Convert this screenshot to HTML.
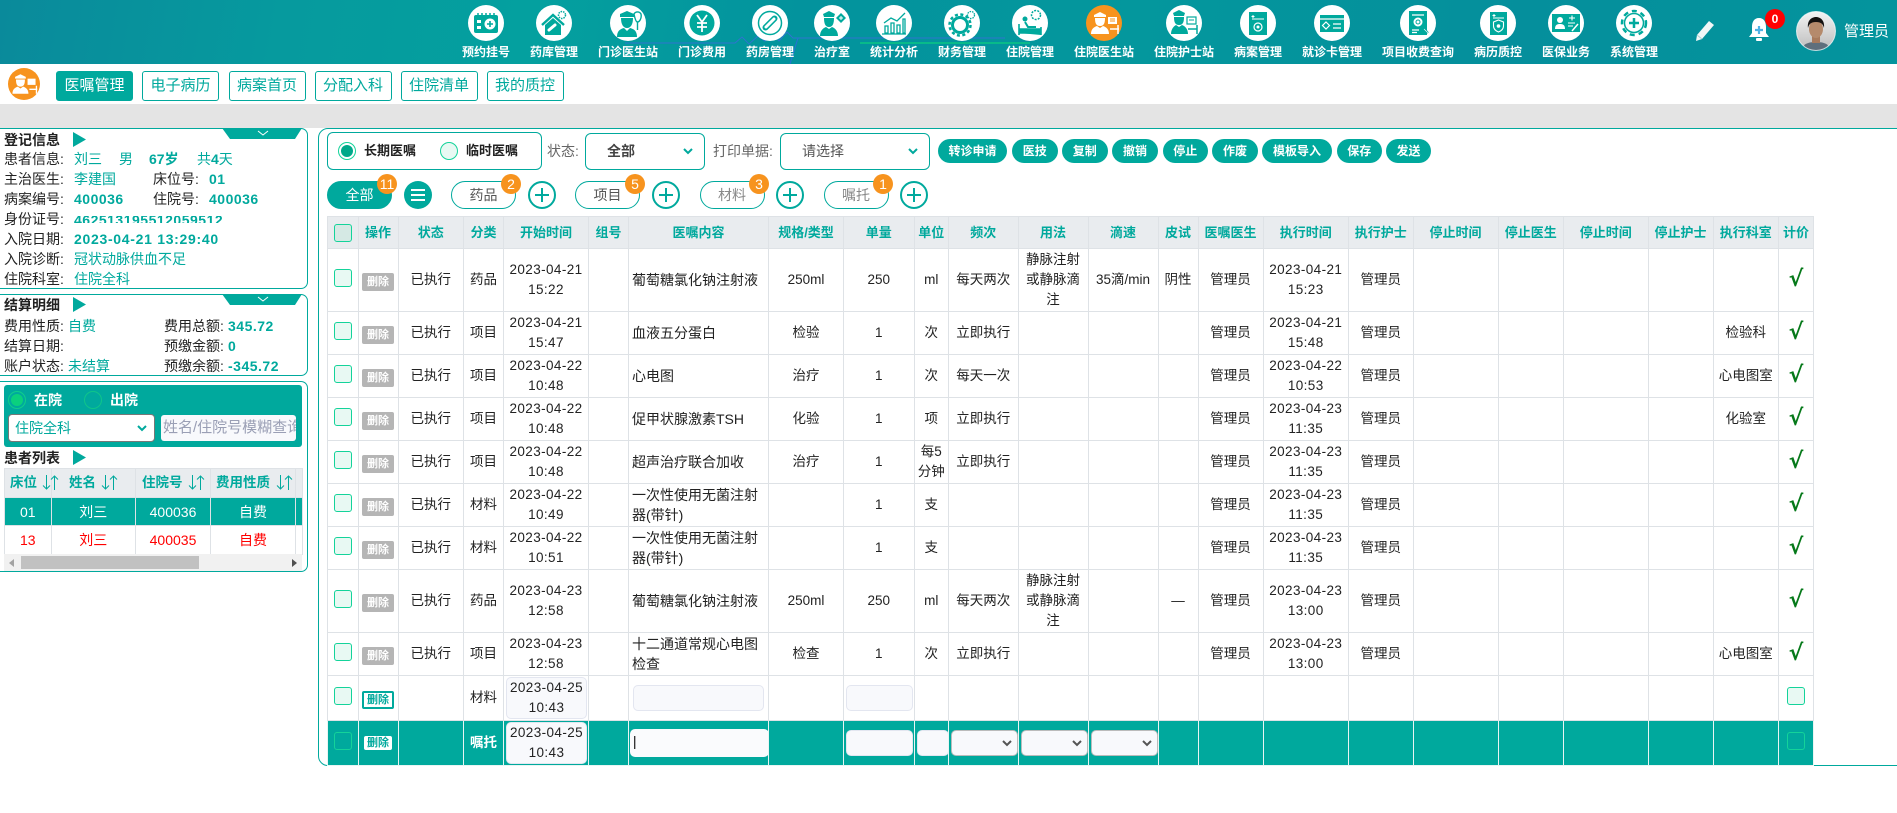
<!DOCTYPE html>
<html lang="zh"><head><meta charset="utf-8"><title>医嘱管理</title>
<style>
*{box-sizing:border-box}
html,body{margin:0;padding:0;width:1897px;height:813px;overflow:hidden;background:#fff}
body{position:relative;font:14px/20px "Liberation Sans","Noto Sans CJK SC",sans-serif;color:#222}
.a{position:absolute}
#hd{left:0;top:0;width:1897px;height:64px;overflow:hidden;background:linear-gradient(100deg,#0a8a9b 0,#069a9e 15%,#04a09f 28%,#03939d 42%,#04979d 60%,#058f9c 80%,#04949d 100%)}
.n{position:absolute;top:5px;width:110px;margin-left:-55px;text-align:center;color:#fff;font-weight:700;font-size:12px;line-height:16px}
.n svg{display:block;margin:0 auto 3px;width:36px;height:36px}
.tab{position:absolute;top:71px;height:30px;width:77px;border:1px solid #00a99d;border-radius:3px;color:#00a99d;font-size:15px;line-height:28px;text-align:center}
.tab.on{background:#00a99d;color:#fff}
.pn{position:absolute;left:0;width:308px;border:1px solid #00a99d;border-left:0;border-radius:0 7px 7px 0;background:#fff}
.row{position:absolute;white-space:nowrap;line-height:20px}
.v{color:#00a99d}.b{font-weight:700;letter-spacing:.5px}
.tt{font-weight:700;color:#222}
.sq{position:absolute;width:18px;height:18px;background:#e8f9f3;border:1px solid #14d39a;border-radius:3px}
.bx{position:absolute;border:1px solid #00a99d;border-radius:6px;background:#fff}
.bt{position:absolute;top:139px;height:24px;background:#00a99d;color:#fff;border-radius:12px;font-size:12px;font-weight:700;line-height:24px;text-align:center}
.pl{position:absolute;top:181px;width:65px;height:28px;border:1px solid #00a99d;border-radius:14px;background:#fff;color:#555;text-align:center;line-height:27px;font-size:14px}
.bd{position:absolute;top:174px;width:20px;height:20px;border-radius:50%;background:#f7931e;color:#fff;text-align:center;line-height:20px;font-size:14px}
.pc{position:absolute;top:181px;width:28px;height:28px;border:2px solid #00a99d;border-radius:50%;background:#fff}
.pc:before{content:"";position:absolute;left:5px;top:11px;width:14px;height:2px;background:#00a99d}
.pc:after{content:"";position:absolute;left:11px;top:5px;width:2px;height:14px;background:#00a99d}
table{border-collapse:collapse;table-layout:fixed}
#tb{position:absolute;left:326.5px;top:216px;width:1486.5px}
#tb td,#tb th{border:1px solid #dee2e6;padding:0 2px;text-align:center;vertical-align:middle;font-size:13.5px;line-height:20px;font-weight:400;color:#222;overflow:hidden}
#tb th{background:#e9ecef;color:#00a99d;font-weight:700;font-size:13px;white-space:nowrap;padding:0}
#tb td.l{text-align:left;padding-left:3px;font-size:14px}
.d{letter-spacing:.4px;font-size:14px}
.ck{display:block;width:18px;height:18px;margin:-5px auto 0;background:#e8f9f3;border:1px solid #14d39a;border-radius:3px}
.dl{display:block;width:32px;height:18px;margin:3px auto 0;background:#b5b5b5;color:#fff;font-size:11px;font-weight:700;line-height:18px;border-radius:2px}
.y{color:#06791a;font-size:22px;font-weight:700;position:relative;top:1px;font-family:"DejaVu Sans",sans-serif}
#tb tr.g td{background:#00a99d;color:#fff;border-color:#e8f5f3;overflow:visible}
.ip{display:block;background:#f8f9fc;border:1px solid #e3e6f0;border-radius:5px;margin:auto}
#lt{position:absolute;left:4px;top:468px;width:298px}
#lt td,#lt th{border:1px solid #dee2e6;text-align:center;padding:0;line-height:20px;font-size:14px;overflow:hidden;white-space:nowrap}
#lt th{background:#e9ecef}
#lt .s td{background:#00a99d;color:#fff}
#lt .r td{color:#f00}
.lh{position:absolute;top:473px;color:#00a99d;font-weight:700;font-size:13.5px;line-height:20px;white-space:nowrap}
.ar{position:absolute;top:475px}
</style></head><body>
<div id="hd" class="a">
<svg class="a" style="left:0;top:0" width="1897" height="64"><path d="M625 43h110l7-6 7 7 9-8 7 5 8-8 6 8 8-9 6 6h212" fill="none" stroke="#2f74d0" stroke-width="1"/><path d="M790 64l8-26" stroke="#2a6fd8" fill="none"/><path d="M860 43h170" stroke="#0bd07f" stroke-width="1.2" fill="none"/></svg>
<div class="n" style="left:486px"><svg viewBox="0 0 36 36"><circle cx="18" cy="18" r="18" fill="#fff"/><rect x="6" y="10" width="24" height="18" rx="2" fill="#00a99d"/><path d="M10 8v4M14 8v4M18 8v4M22 8v4M26 8v4" stroke="#00a99d" stroke-width="1.5"/><rect x="9" y="15" width="4" height="3" fill="#fff"/><rect x="9" y="21" width="4" height="3" fill="#fff"/><circle cx="22" cy="19" r="5.5" fill="#fff"/><path d="M22 16v6M19 19h6" stroke="#00a99d" stroke-width="1.6"/></svg>预约挂号</div>
<div class="n" style="left:554px"><svg viewBox="0 0 36 36"><circle cx="18" cy="18" r="18" fill="#fff"/><path d="M6 20L17 10l11 10" fill="none" stroke="#00a99d" stroke-width="2.4"/><path d="M9 20L17 13l8 7v10H9z" fill="#00a99d"/><path d="M13 25l6-5" stroke="#fff" stroke-width="3" stroke-linecap="round"/><circle cx="26" cy="10" r="3.5" fill="none" stroke="#00a99d" stroke-width="1.5" stroke-dasharray="1.5 1"/></svg>药库管理</div>
<div class="n" style="left:628px"><svg viewBox="0 0 36 36"><circle cx="18" cy="18" r="18" fill="#fff"/><path d="M10 9l7-3 7 3v3H10z" fill="#00a99d"/><path d="M11 13h12c0 6-2 10-6 10s-6-4-6-10z" fill="#00a99d"/><path d="M7 32c0-6 3-8 7-9l3 3 3-3c4 1 7 3 7 9z" fill="#00a99d"/><path d="M24 9a4 4 0 0 1 7 0c1 5-2 8-3.500 8S25 14 24 9zM27.500 17v8" fill="none" stroke="#00a99d" stroke-width="1.4"/></svg>门诊医生站</div>
<div class="n" style="left:702px"><svg viewBox="0 0 36 36"><circle cx="18" cy="18" r="18" fill="#fff"/><circle cx="18" cy="18" r="12.500" fill="#00a99d"/><path d="M13 10l5 7 5-7M18 17v10M13 18h10M13 22h10" fill="none" stroke="#fff" stroke-width="1.8"/></svg>门诊费用</div>
<div class="n" style="left:770px"><svg viewBox="0 0 36 36"><circle cx="18" cy="18" r="18" fill="#fff"/><circle cx="18" cy="18" r="11.500" fill="none" stroke="#00a99d" stroke-width="1.500"/><path d="M13.500 22.500l9-9" stroke="#00a99d" stroke-width="6" stroke-linecap="round"/><path d="M14 22l8-8" stroke="#fff" stroke-width="3" stroke-linecap="round"/></svg>药房管理</div>
<div class="n" style="left:832px"><svg viewBox="0 0 36 36"><circle cx="18" cy="18" r="18" fill="#fff"/><path d="M9 9l6-3 6 3-1 3H10z" fill="#00a99d"/><path d="M10 13h10c0 5-1 9-5 9s-5-4-5-9z" fill="#00a99d"/><path d="M6 31c0-5 3-8 6-9l3 2 3-2c3 1 6 4 6 9z" fill="#00a99d"/><path d="M27 8l5 5-5 5-5-5z" fill="#00a99d"/><path d="M27 11v4M25 13h4" stroke="#fff" stroke-width="1"/></svg>治疗室</div>
<div class="n" style="left:894px"><svg viewBox="0 0 36 36"><circle cx="18" cy="18" r="18" fill="#fff"/><path d="M6 29h24M8 18l7-5 6 3 8-8" fill="none" stroke="#00a99d" stroke-width="1.300"/><path d="M9 21h3v7H9zM15 18h3v10h-3zM21 20h3v8h-3zM27 14h2v14h-2z" fill="none" stroke="#00a99d" stroke-width="1.300"/></svg>统计分析</div>
<div class="n" style="left:962px"><svg viewBox="0 0 36 36"><circle cx="18" cy="18" r="18" fill="#fff"/><circle cx="16" cy="20" r="7.500" fill="none" stroke="#00a99d" stroke-width="3"/><circle cx="16" cy="20" r="10.500" fill="none" stroke="#00a99d" stroke-width="2.500" stroke-dasharray="3 2.500"/><circle cx="27" cy="10" r="3.500" fill="none" stroke="#00a99d" stroke-width="1.300" stroke-dasharray="1.500 1"/></svg>财务管理</div>
<div class="n" style="left:1030px"><svg viewBox="0 0 36 36"><circle cx="18" cy="18" r="18" fill="#fff"/><path d="M7 19v11M7 28h22v2M29 22v8M7 24h22v4H7z" fill="#00a99d" stroke="#00a99d" stroke-width="1.600"/><circle cx="13" cy="14" r="2.500" fill="#00a99d"/><path d="M13 17l3 5h8" fill="none" stroke="#00a99d" stroke-width="2"/><circle cx="24" cy="10" r="4.500" fill="none" stroke="#00a99d" stroke-width="1.500" stroke-dasharray="2 1.200"/></svg>住院管理</div>
<div class="n" style="left:1104px"><svg viewBox="0 0 36 36"><circle cx="18" cy="18" r="18" fill="#f7931e"/><path d="M8 10l6-3 6 3v2H8z" fill="#fff"/><path d="M9 13h10c0 5-1 8-5 8s-5-3-5-8z" fill="#fff"/><path d="M5 29c0-5 3-7 6-8l3 2 3-2c3 1 6 3 6 8z" fill="#fff"/><rect x="22" y="12" width="9" height="7" fill="#fff"/><path d="M24 14h5M24 16h5" stroke="#f7931e"/><path d="M24 24h9M32 20v9" stroke="#fff" stroke-width="1.500"/></svg>住院医生站</div>
<div class="n" style="left:1184px"><svg viewBox="0 0 36 36"><circle cx="18" cy="18" r="18" fill="#fff"/><path d="M7 8l6-3 6 3-1 3H8z" fill="#00a99d"/><path d="M8 12h10c0 5-1 8-5 8s-5-3-5-8z" fill="#00a99d"/><path d="M5 29c0-5 3-8 5-9l3 2 3-2c3 1 6 4 6 9z" fill="#00a99d"/><rect x="21" y="12" width="9" height="7" fill="none" stroke="#00a99d" stroke-width="1.200"/><path d="M23 15h5" stroke="#00a99d"/><path d="M22 24h9M31 20v9" stroke="#00a99d" stroke-width="1.500"/></svg>住院护士站</div>
<div class="n" style="left:1258px"><svg viewBox="0 0 36 36"><circle cx="18" cy="18" r="18" fill="#fff"/><rect x="9" y="7" width="18" height="23" fill="#00a99d"/><path d="M12 14h12M13 10v3M11.500 11.500h3" stroke="#fff"/><circle cx="18" cy="22" r="4" fill="none" stroke="#fff" stroke-width="1.200"/><circle cx="18" cy="22" r="1.500" fill="#fff"/></svg>病案管理</div>
<div class="n" style="left:1332px"><svg viewBox="0 0 36 36"><circle cx="18" cy="18" r="18" fill="#fff"/><rect x="6" y="10" width="24" height="17" fill="#00a99d"/><path d="M6 14h24M19 19h8M19 23h8" stroke="#fff" stroke-width="1.300"/><path d="M12 17l3.500 3.500L12 24l-3.500-3.500z" fill="none" stroke="#fff" stroke-width="1.200"/></svg>就诊卡管理</div>
<div class="n" style="left:1418px"><svg viewBox="0 0 36 36"><circle cx="18" cy="18" r="18" fill="#fff"/><rect x="9" y="6" width="18" height="24" fill="#00a99d"/><path d="M12 10h12M12 25h7M12 27.500h5" stroke="#fff" stroke-width="1.200"/><circle cx="18" cy="17" r="5" fill="#fff" stroke="#00a99d"/><circle cx="18" cy="17" r="2" fill="none" stroke="#00a99d"/><path d="M22 21l6 7" stroke="#00a99d" stroke-width="2"/><path d="M24 24l4 4" stroke="#fff" stroke-width=".6"/></svg>项目收费查询</div>
<div class="n" style="left:1498px"><svg viewBox="0 0 36 36"><circle cx="18" cy="18" r="18" fill="#fff"/><rect x="10" y="7" width="17" height="23" fill="#00a99d"/><path d="M13 13h11M14 9v3M12.500 10.500h3" stroke="#fff"/><path d="M18.500 15l5 2v4c0 3-2.500 5-5 6-2.500-1-5-3-5-6v-4z" fill="none" stroke="#fff" stroke-width="1.100"/><circle cx="18.500" cy="21" r="1.800" fill="#fff"/></svg>病历质控</div>
<div class="n" style="left:1566px"><svg viewBox="0 0 36 36"><circle cx="18" cy="18" r="18" fill="#fff"/><rect x="4" y="9" width="28" height="18" fill="#00a99d"/><circle cx="12" cy="15" r="3" fill="#fff"/><path d="M7 24c0-4 2-5 5-5s5 1 5 5z" fill="#fff"/><path d="M21 13h6M24 10.500v5M20 18h7M20 21h5" stroke="#fff" stroke-width="1.100"/><path d="M24 26l6-7" stroke="#fff" stroke-width="1.500"/></svg>医保业务</div>
<div class="n" style="left:1634px"><svg viewBox="0 0 36 36"><circle cx="18" cy="18" r="18" fill="#fff"/><circle cx="18" cy="18" r="9.500" fill="none" stroke="#00a99d" stroke-width="1.500"/><circle cx="18" cy="18" r="12" fill="none" stroke="#00a99d" stroke-width="2.500" stroke-dasharray="5 4"/><path d="M18 13v10M13 18h10" stroke="#00a99d" stroke-width="2.500"/></svg>系统管理</div>
<svg class="a" style="left:1694px;top:19px" width="24" height="24" viewBox="0 0 24 24"><path d="M15 2l5 4L8 20l-6 2 1-6z" fill="#f2f7f7"/><path d="M3 16l5 4" stroke="#aacfd0"/></svg>
<svg class="a" style="left:1747px;top:17px" width="24" height="28" viewBox="0 0 24 28"><path d="M12 1c5 0 7 4 7 9v6l3 4H2l3-4v-6c0-5 2-9 7-9z" fill="#fff"/><rect x="9" y="21" width="6" height="3" rx="1" fill="#fff"/><path d="M12 9v8M8 13h8" stroke="#4fb2e6" stroke-width="2.200"/></svg>
<div class="a" style="left:1765px;top:9px;width:20px;height:20px;border-radius:50%;background:#f00;color:#fff;font-size:12px;font-weight:700;text-align:center;line-height:20px">0</div>
<svg class="a" style="left:1796px;top:11px" width="40" height="40" viewBox="0 0 40 40"><defs><clipPath id="cp"><circle cx="20" cy="20" r="19.500"/></clipPath><linearGradient id="ag" x1="0" y1="0" x2="0" y2="1"><stop offset="0" stop-color="#f4f4f4"/><stop offset="1" stop-color="#bbb"/></linearGradient></defs><g clip-path="url(#cp)"><rect width="40" height="40" fill="url(#ag)"/><path d="M6 40c0-7 6-9 14-9s14 2 14 9z" fill="#5f6f7c"/><rect x="16" y="24" width="8" height="8" fill="#a87a5c"/><ellipse cx="20" cy="18" rx="7" ry="9" fill="#b58a6c"/><path d="M12 17c-1-8 4-11 8-11s9 3 8 11c-1-4-3-6-8-6s-7 2-8 6z" fill="#141110"/></g><circle cx="20" cy="20" r="19.500" fill="none" stroke="#fff" stroke-opacity=".7"/></svg>
<div class="a" style="left:1844px;top:22px;color:#fff;font-size:15px;white-space:nowrap">管理员</div>
</div>

<svg class="a" style="left:8px;top:68px" width="32" height="32" viewBox="0 0 36 36"><circle cx="18" cy="18" r="18" fill="#f7931e"/><path d="M8 10l6-3 6 3v2H8z" fill="#fff"/><path d="M9 13h10c0 5-1 8-5 8s-5-3-5-8z" fill="#fff"/><path d="M5 29c0-5 3-7 6-8l3 2 3-2c3 1 6 3 6 8z" fill="#fff"/><rect x="22" y="12" width="9" height="7" fill="#fff"/><path d="M24 24h9M32 20v9" stroke="#fff" stroke-width="1.500"/></svg>
<div class="tab on" style="left:56px">医嘱管理</div>
<div class="tab" style="left:142px">电子病历</div>
<div class="tab" style="left:228.500px">病案首页</div>
<div class="tab" style="left:314.500px">分配入科</div>
<div class="tab" style="left:400.500px">住院清单</div>
<div class="tab" style="left:486.500px">我的质控</div>
<div class="a" style="left:0;top:104px;width:1897px;height:24px;background:#e4e4e4"></div>

<!-- panel 1 -->
<div class="pn" style="top:128px;height:161px"></div>
<svg class="a" style="left:222px;top:128px" width="83" height="12"><path d="M0 0h80l-7 11H8z" fill="#00a99d"/><path d="M36 3l5 4 5-4" fill="none" stroke="#fff"/></svg>
<div class="row tt" style="left:4px;top:130px">登记信息</div>
<svg class="a" style="left:73px;top:132px" width="14" height="15"><path d="M0 0l13 7.500L0 15z" fill="#00a99d"/></svg>
<div class="row" style="left:4px;top:149px">患者信息:</div><div class="row v" style="left:74px;top:149px">刘三</div><div class="row v" style="left:119px;top:149px">男</div><div class="row v b" style="left:149px;top:149px;letter-spacing:0">67岁</div><div class="row v" style="left:197px;top:149px">共<b>4</b>天</div>
<div class="row" style="left:4px;top:169px">主治医生:</div><div class="row v" style="left:74px;top:169px">李建国</div><div class="row" style="left:153px;top:169px">床位号:</div><div class="row v b" style="left:209px;top:169px">01</div>
<div class="row" style="left:4px;top:189px">病案编号:</div><div class="row v b" style="left:74px;top:189px">400036</div><div class="row" style="left:153px;top:189px">住院号:</div><div class="row v b" style="left:209px;top:189px">400036</div>
<div class="row" style="left:4px;top:209px">身份证号:</div><div class="a" style="left:74px;top:216px;height:7px;overflow:hidden;width:160px"><div class="v b" style="margin-top:-6px;white-space:nowrap;line-height:20px">462513195512059512</div></div>
<div class="row" style="left:4px;top:229px">入院日期:</div><div class="row v b" style="left:74px;top:229px;letter-spacing:.7px">2023-04-21 13:29:40</div>
<div class="row" style="left:4px;top:249px">入院诊断:</div><div class="row v" style="left:74px;top:249px">冠状动脉供血不足</div>
<div class="row" style="left:4px;top:269px">住院科室:</div><div class="row v" style="left:74px;top:269px">住院全科</div>

<!-- panel 2 -->
<div class="pn" style="top:294px;height:82px"></div>
<svg class="a" style="left:222px;top:294px" width="83" height="12"><path d="M0 0h80l-7 11H8z" fill="#00a99d"/><path d="M36 3l5 4 5-4" fill="none" stroke="#fff"/></svg>
<div class="row tt" style="left:4px;top:295px">结算明细</div>
<svg class="a" style="left:73px;top:297px" width="14" height="15"><path d="M0 0l13 7.500L0 15z" fill="#00a99d"/></svg>
<div class="row" style="left:4px;top:316px">费用性质:</div><div class="row v" style="left:68px;top:316px">自费</div><div class="row" style="left:164px;top:316px">费用总额:</div><div class="row v b" style="left:228px;top:316px">345.72</div>
<div class="row" style="left:4px;top:336px">结算日期:</div><div class="row" style="left:164px;top:336px">预缴金额:</div><div class="row v b" style="left:228px;top:336px">0</div>
<div class="row" style="left:4px;top:356px">账户状态:</div><div class="row v" style="left:68px;top:356px">未结算</div><div class="row" style="left:164px;top:356px">预缴余额:</div><div class="row v b" style="left:228px;top:356px">-345.72</div>

<!-- panel 3 -->
<div class="pn" style="top:381px;height:191px"></div>
<div class="a" style="left:4px;top:385px;width:298px;height:62px;background:#00a99d;border-radius:3px"></div>
<div class="a" style="left:8px;top:391px;width:18px;height:18px;border-radius:50%;border:1.500px solid #0fcf8a;background:#fff0"></div>
<div class="a" style="left:11px;top:394px;width:12px;height:12px;border-radius:50%;background:#0ad07e"></div>
<div class="row" style="left:34px;top:390px;color:#fff;font-weight:700">在院</div>
<div class="a" style="left:84px;top:391px;width:18px;height:18px;border-radius:50%;border:1.500px solid #0fc58a"></div>
<div class="row" style="left:110px;top:390px;color:#fff;font-weight:700">出院</div>
<div class="a" style="left:8px;top:414px;width:147px;height:28px;background:#fff;border:1px solid #777;border-radius:4px;color:#00a99d;line-height:26px;padding-left:6px">住院全科<svg class="a" style="right:7px;top:10px" width="10" height="7"><path d="M1 1l4 4 4-4" fill="none" stroke="#00a99d" stroke-width="2"/></svg></div>
<div class="a" style="left:161px;top:415px;width:135px;height:26px;background:#f8f9fc;border-radius:3px;color:#9a9fb5;font-size:15px;line-height:26px;padding-left:2px;overflow:hidden;white-space:nowrap">姓名/住院号模糊查询</div>
<div class="row tt" style="left:4px;top:448px">患者列表</div>
<svg class="a" style="left:73px;top:450px" width="14" height="15"><path d="M0 0l13 7.500L0 15z" fill="#00a99d"/></svg>
<table id="lt"><colgroup><col style="width:46.500px"><col style="width:84.500px"><col style="width:75px"><col style="width:85px"><col style="width:7px"></colgroup>
<tr style="height:29px"><th></th><th></th><th></th><th></th><th></th></tr>
<tr class="s" style="height:28px"><td>01</td><td>刘三</td><td>400036</td><td>自费</td><td></td></tr>
<tr class="r" style="height:29px"><td>13</td><td>刘三</td><td>400035</td><td>自费</td><td></td></tr></table>
<div class="lh" style="left:10px">床位</div>
<svg class="ar" style="left:42px" width="17" height="15"><path d="M4.500 0v14M1 10.500l3.500 3.500L8 10.500M12.500 15V1M9 4.500L12.500 1 16 4.500" fill="none" stroke="#00a99d"/></svg>
<div class="lh" style="left:69px">姓名</div>
<svg class="ar" style="left:101px" width="17" height="15"><path d="M4.500 0v14M1 10.500l3.500 3.500L8 10.500M12.500 15V1M9 4.500L12.500 1 16 4.500" fill="none" stroke="#00a99d"/></svg>
<div class="lh" style="left:142px">住院号</div>
<svg class="ar" style="left:188px" width="17" height="15"><path d="M4.500 0v14M1 10.500l3.500 3.500L8 10.500M12.500 15V1M9 4.500L12.500 1 16 4.500" fill="none" stroke="#00a99d"/></svg>
<div class="lh" style="left:216px">费用性质</div>
<svg class="ar" style="left:276px" width="17" height="15"><path d="M4.500 0v14M1 10.500l3.500 3.500L8 10.500M12.500 15V1M9 4.500L12.500 1 16 4.500" fill="none" stroke="#00a99d"/></svg>
<div class="a" style="left:4px;top:554px;width:298px;height:17px;background:#f1f1f1"></div>
<div class="a" style="left:21px;top:556px;width:178px;height:13px;background:#c1c1c1"></div>
<svg class="a" style="left:9px;top:559px" width="6" height="8"><path d="M5 0v8L0 4z" fill="#a3a3a3"/></svg>
<svg class="a" style="left:292px;top:559px" width="6" height="8"><path d="M0 0v8l5-4z" fill="#505050"/></svg>

<!-- right panel -->
<div class="a" style="left:318px;top:128px;width:1590px;height:638px;border:1px solid #00a99d;border-radius:10px"></div>
<div class="bx" style="left:327px;top:132px;width:215px;height:38px"></div>
<div class="a" style="left:338px;top:142px;width:18px;height:18px;border-radius:50%;border:1.500px solid #14d39a"></div>
<div class="a" style="left:341px;top:145px;width:12px;height:12px;border-radius:50%;background:#00a98a"></div>
<div class="row" style="left:364px;top:141px;font-size:13px;font-weight:700">长期医嘱</div>
<div class="a" style="left:440px;top:142px;width:18px;height:18px;border-radius:50%;border:1.500px solid #14d39a;background:#e8f9f3"></div>
<div class="row" style="left:466px;top:141px;font-size:13px;font-weight:700">临时医嘱</div>
<div class="row" style="left:547px;top:141px;color:#666;font-size:14px">状态:</div>
<div class="bx" style="left:585px;top:133px;width:120px;height:37px;line-height:35px;padding-left:21px;color:#444;font-weight:700">全部<svg class="a" style="right:11px;top:14px" width="10" height="7"><path d="M1 1l4 4 4-4" fill="none" stroke="#00a99d" stroke-width="2"/></svg></div>
<div class="row" style="left:713px;top:141px;color:#666">打印单据:</div>
<div class="bx" style="left:780px;top:133px;width:150px;height:37px;line-height:35px;padding-left:21px;color:#555">请选择<svg class="a" style="right:11px;top:14px" width="10" height="7"><path d="M1 1l4 4 4-4" fill="none" stroke="#00a99d" stroke-width="2"/></svg></div>
<div class="bt" style="left:938px;width:69px">转诊申请</div>
<div class="bt" style="left:1012px;width:45.500px">医技</div>
<div class="bt" style="left:1062px;width:45.500px">复制</div>
<div class="bt" style="left:1112px;width:46px">撤销</div>
<div class="bt" style="left:1162.500px;width:45.500px">停止</div>
<div class="bt" style="left:1212px;width:46px">作废</div>
<div class="bt" style="left:1262px;width:70px">模板导入</div>
<div class="bt" style="left:1336.500px;width:45.500px">保存</div>
<div class="bt" style="left:1386px;width:45px">发送</div>

<div class="pl" style="left:327px;background:#00a99d;color:#fff;border-color:#00a99d">全部</div><div class="bd" style="left:377px">11</div>
<div class="a" style="left:404px;top:181px;width:28px;height:28px;border-radius:50%;background:#00a99d"><div class="a" style="left:7px;top:8px;width:14px;height:2px;background:#fff"></div><div class="a" style="left:7px;top:13px;width:14px;height:2px;background:#fff"></div><div class="a" style="left:7px;top:18px;width:14px;height:2px;background:#fff"></div></div>
<div class="pl" style="left:451px">药品</div><div class="bd" style="left:501px">2</div><div class="pc" style="left:528px"></div>
<div class="pl" style="left:575px">项目</div><div class="bd" style="left:625px">5</div><div class="pc" style="left:652px"></div>
<div class="pl" style="left:699.500px;color:#888">材料</div><div class="bd" style="left:749px">3</div><div class="pc" style="left:776px"></div>
<div class="pl" style="left:823.500px;color:#888">嘱托</div><div class="bd" style="left:873px">1</div><div class="pc" style="left:900px"></div>

<table id="tb"><colgroup><col style="width:31px"><col style="width:40px"><col style="width:65.500px"><col style="width:40px"><col style="width:85px"><col style="width:40px"><col style="width:140px"><col style="width:75px"><col style="width:70.500px"><col style="width:34.500px"><col style="width:69.500px"><col style="width:70px"><col style="width:70px"><col style="width:40px"><col style="width:65px"><col style="width:85.500px"><col style="width:64.500px"><col style="width:85px"><col style="width:65.500px"><col style="width:84.500px"><col style="width:65px"><col style="width:65.500px"><col style="width:35px"></colgroup>
<tr style="height:32px"><th><span class="ck" style="margin-top:0;background:#d5e9e4"></span></th><th>操作</th><th>状态</th><th>分类</th><th>开始时间</th><th>组号</th><th>医嘱内容</th><th>规格/类型</th><th>单量</th><th>单位</th><th>频次</th><th>用法</th><th>滴速</th><th>皮试</th><th>医嘱医生</th><th>执行时间</th><th>执行护士</th><th>停止时间</th><th>停止医生</th><th>停止时间</th><th>停止护士</th><th>执行科室</th><th>计价</th></tr>
<tr style="height:63px"><td><span class="ck"></span></td><td><span class="dl">删除</span></td><td>已执行</td><td>药品</td><td class="d">2023-04-21<br>15:22</td><td></td><td class="l">葡萄糖氯化钠注射液</td><td>250ml</td><td>250</td><td>ml</td><td>每天两次</td><td>静脉注射或静脉滴注</td><td style="white-space:nowrap;padding:0">35滴/min</td><td>阴性</td><td>管理员</td><td class="d">2023-04-21<br>15:23</td><td>管理员</td><td></td><td></td><td></td><td></td><td></td><td><span class="y">√</span></td></tr>
<tr style="height:43px"><td><span class="ck"></span></td><td><span class="dl">删除</span></td><td>已执行</td><td>项目</td><td class="d">2023-04-21<br>15:47</td><td></td><td class="l">血液五分蛋白</td><td>检验</td><td>1</td><td>次</td><td>立即执行</td><td></td><td></td><td></td><td>管理员</td><td class="d">2023-04-21<br>15:48</td><td>管理员</td><td></td><td></td><td></td><td></td><td>检验科</td><td><span class="y">√</span></td></tr>
<tr style="height:43px"><td><span class="ck"></span></td><td><span class="dl">删除</span></td><td>已执行</td><td>项目</td><td class="d">2023-04-22<br>10:48</td><td></td><td class="l">心电图</td><td>治疗</td><td>1</td><td>次</td><td>每天一次</td><td></td><td></td><td></td><td>管理员</td><td class="d">2023-04-22<br>10:53</td><td>管理员</td><td></td><td></td><td></td><td></td><td>心电图室</td><td><span class="y">√</span></td></tr>
<tr style="height:43px"><td><span class="ck"></span></td><td><span class="dl">删除</span></td><td>已执行</td><td>项目</td><td class="d">2023-04-22<br>10:48</td><td></td><td class="l">促甲状腺激素TSH</td><td>化验</td><td>1</td><td>项</td><td>立即执行</td><td></td><td></td><td></td><td>管理员</td><td class="d">2023-04-23<br>11:35</td><td>管理员</td><td></td><td></td><td></td><td></td><td>化验室</td><td><span class="y">√</span></td></tr>
<tr style="height:43px"><td><span class="ck"></span></td><td><span class="dl">删除</span></td><td>已执行</td><td>项目</td><td class="d">2023-04-22<br>10:48</td><td></td><td class="l">超声治疗联合加收</td><td>治疗</td><td>1</td><td>每5分钟</td><td>立即执行</td><td></td><td></td><td></td><td>管理员</td><td class="d">2023-04-23<br>11:35</td><td>管理员</td><td></td><td></td><td></td><td></td><td></td><td><span class="y">√</span></td></tr>
<tr style="height:43px"><td><span class="ck"></span></td><td><span class="dl">删除</span></td><td>已执行</td><td>材料</td><td class="d">2023-04-22<br>10:49</td><td></td><td class="l">一次性使用无菌注射器(带针)</td><td></td><td>1</td><td>支</td><td></td><td></td><td></td><td></td><td>管理员</td><td class="d">2023-04-23<br>11:35</td><td>管理员</td><td></td><td></td><td></td><td></td><td></td><td><span class="y">√</span></td></tr>
<tr style="height:43px"><td><span class="ck"></span></td><td><span class="dl">删除</span></td><td>已执行</td><td>材料</td><td class="d">2023-04-22<br>10:51</td><td></td><td class="l">一次性使用无菌注射器(带针)</td><td></td><td>1</td><td>支</td><td></td><td></td><td></td><td></td><td>管理员</td><td class="d">2023-04-23<br>11:35</td><td>管理员</td><td></td><td></td><td></td><td></td><td></td><td><span class="y">√</span></td></tr>
<tr style="height:63px"><td><span class="ck"></span></td><td><span class="dl">删除</span></td><td>已执行</td><td>药品</td><td class="d">2023-04-23<br>12:58</td><td></td><td class="l">葡萄糖氯化钠注射液</td><td>250ml</td><td>250</td><td>ml</td><td>每天两次</td><td>静脉注射或静脉滴注</td><td></td><td>—</td><td>管理员</td><td class="d">2023-04-23<br>13:00</td><td>管理员</td><td></td><td></td><td></td><td></td><td></td><td><span class="y">√</span></td></tr>
<tr style="height:43px"><td><span class="ck"></span></td><td><span class="dl">删除</span></td><td>已执行</td><td>项目</td><td class="d">2023-04-23<br>12:58</td><td></td><td class="l">十二通道常规心电图检查</td><td>检查</td><td>1</td><td>次</td><td>立即执行</td><td></td><td></td><td></td><td>管理员</td><td class="d">2023-04-23<br>13:00</td><td>管理员</td><td></td><td></td><td></td><td></td><td>心电图室</td><td><span class="y">√</span></td></tr>
<tr style="height:45px"><td><span class="ck"></span></td><td><span class="dl" style="background:#fff;color:#00a99d;border:2px solid #00a99d;line-height:14px">删除</span></td><td></td><td>材料</td><td class="d" style="padding:1px 2px"><span class="ip" style="width:81px;height:42px">2023-04-25<br>10:43</span></td><td></td><td style="padding:0 4px"><span class="ip" style="height:26px"></span></td><td></td><td><span class="ip" style="width:67px;height:26px"></span></td><td></td><td></td><td></td><td></td><td></td><td></td><td></td><td></td><td></td><td></td><td></td><td></td><td></td><td><span class="ck" style="margin-top:-4px"></span></td></tr>
<tr class="g" style="height:45px"><td><span class="ck" style="background:#00a99d"></span></td><td><span class="dl" style="background:#fff;color:#00a99d;width:28px;height:14px;line-height:14px;margin-top:0">删除</span></td><td></td><td style="font-weight:700">嘱托</td><td class="d" style="padding:1px 2px;color:#222"><span class="ip" style="width:81px;height:42px;color:#222">2023-04-25<br>10:43</span></td><td></td><td style="padding:0 1px"><span class="ip" style="width:139px;height:28px;background:#fafbfd;border:0;text-align:left;padding-left:3px;line-height:26px;color:#000">|</span></td><td></td><td><span class="ip" style="width:67px;height:26px"></span></td><td><span class="ip" style="width:32px;height:26px"></span></td><td><span class="ip" style="width:66.500px;height:26px;border-color:#bbb;position:relative"><svg class="a" style="right:5px;top:9px" width="10" height="7"><path d="M1 1l4 4 4-4" fill="none" stroke="#555" stroke-width="2"/></svg></span></td><td><span class="ip" style="width:67px;height:26px;border-color:#bbb;position:relative"><svg class="a" style="right:5px;top:9px" width="10" height="7"><path d="M1 1l4 4 4-4" fill="none" stroke="#555" stroke-width="2"/></svg></span></td><td><span class="ip" style="width:67px;height:26px;border-color:#bbb;position:relative"><svg class="a" style="right:5px;top:9px" width="10" height="7"><path d="M1 1l4 4 4-4" fill="none" stroke="#555" stroke-width="2"/></svg></span></td><td></td><td></td><td></td><td></td><td></td><td></td><td></td><td></td><td></td><td><span class="ck" style="background:#00a99d;margin-top:-4px"></span></td></tr>
</table>
</body></html>
